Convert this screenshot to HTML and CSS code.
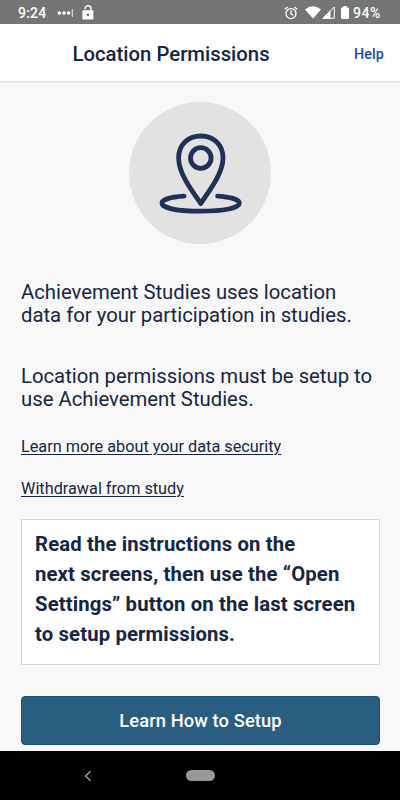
FILE: index.html
```html
<!DOCTYPE html>
<html lang="en">
<head>
<meta charset="utf-8">
<title>Location Permissions</title>
<link rel="stylesheet" href="styles.css">
</head>
<body>
<div class="status">
  <span class="time">9:24</span>
  <svg class="dots" width="17" height="8" viewBox="0 0 17 8" fill="#fff"><circle cx="2.3" cy="4" r="1.8"/><circle cx="7" cy="4" r="1.8"/><circle cx="11.7" cy="4" r="1.8"/><path d="M14.8 0h.9v8h-.9z"/></svg>
  <svg class="lock" width="12" height="15" viewBox="0 0 12 15"><path d="M3 4.200V3.800a3 3 0 0 1 6 0V6" fill="none" stroke="#fff" stroke-width="1.4"/><rect x=".4" y="5.2" width="11" height="9.3" rx="1.3" fill="#fff"/><circle cx="5.9" cy="9.8" r="1.3" fill="#757575"/></svg>
  <svg class="alarm" width="14" height="14" viewBox="0 0 14 14" fill="none" stroke="#fff" stroke-width="1.3"><circle cx="7" cy="7.6" r="5"/><path d="M7 4.5v3.4l2.2 1.3M.8 3.3l2.8-2.3M13.2 3.3L10.4 1"/></svg>
  <svg class="wifi" width="16" height="13" viewBox="0 0 16 13" fill="#fff"><path d="M0 3.4Q8-2.7 16 3.4L8 12.6z"/></svg>
  <svg class="signal" width="13" height="13" viewBox="0 0 13 13"><path d="M.9 12.3L12.3 1v11.300z" fill="none" stroke="#fff" stroke-width="1"/><path d="M0 12.700L8.500 4.200v8.500z" fill="#fff"/></svg>
  <svg class="battery" width="8" height="13" viewBox="0 0 8 14" preserveAspectRatio="none" fill="#fff"><path d="M2.300 0h3.400v1.500H7q1 0 1 1V13q0 1-1 1H1q-1 0-1-1V2.500q0-1 1-1h1.300z"/></svg>
  <span class="percent">94%</span>
</div>
<header class="header">
  <h1 class="title">Location Permissions</h1>
  <a class="help">Help</a>
</header>
<main class="content">
  <div class="badge">
    <svg width="142" height="142" viewBox="0 0 142 142" fill="none" stroke="#1f3158" stroke-width="4.800" stroke-linecap="round" stroke-linejoin="round"><path d="M71.800 101.500C63 89 49.600 71.500 49.600 56C49.600 42.500 59 34 71.800 34S94 42.500 94 56C94 71.500 80 89 71.800 101.500z"/><circle cx="71.800" cy="56" r="10.300"/><path d="M55 94.200C41 95 33 98 33 101.200C33 106 49 109.200 71.800 109.200S110.300 106 110.300 101.200C110.300 98 102 95 88.600 94.200"/></svg>
  </div>
  <p class="lead">Achievement Studies uses location<br>data for your participation in studies.</p>
  <p class="lead">Location permissions must be setup to<br>use Achievement Studies.</p>
  <a class="link">Learn more about your data security</a>
  <a class="link">Withdrawal from study</a>
  <div class="note">Read the instructions on the<br>next screens, then use the “Open<br>Settings” button on the last screen<br>to setup permissions.</div>
  <div class="button">Learn How to Setup</div>
</main>
<nav class="nav">
  <svg class="back" width="8" height="12" viewBox="0 0 8 12" fill="none" stroke="#999" stroke-width="1.500"><path d="M6.500 1.300L1.600 6l4.900 4.700"/></svg>
  <span class="home"></span>
</nav>
</body>
</html>
```
FILE: styles.css
```css
* { box-sizing: border-box; }
body { margin: 0; width: 400px; height: 800px; overflow: hidden; display: flex; flex-direction: column; background: #f8f8f8; color: #142644; font-family: Roboto, sans-serif; white-space: nowrap; }
svg { display: block; flex: none; }
.status { height: 24px; flex: none; display: flex; align-items: center; background: #757575; color: #fff; font-size: 14px; font-weight: 500; padding: 1px 0 0 18px; }
.time { width: 39px; letter-spacing: .2px; }
.lock { margin-left: 8px; }
.alarm { margin-left: 190px; }
.wifi { margin-left: 6.500px; }
.signal { margin-left: 1px; }
.battery { margin-left: 6.500px; }
.percent { margin-left: 4px; letter-spacing: .6px; }
.header { height: 57px; flex: none; display: flex; align-items: center; background: #fff; box-shadow: 0 1px 2px rgba(0,0,0,.14); padding: 3px 16px 0 72.500px; position: relative; }
.title { margin: 0; font-size: 20.300px; font-weight: 500; line-height: 24px; letter-spacing: .02px; }
.help { margin-left: auto; font-size: 14.300px; font-weight: 500; color: #1648b5; letter-spacing: .1px; }
.content { flex: 1; min-height: 0; display: flex; flex-direction: column; padding: 21px 20px 0 21px; }
.badge { width: 142px; height: 142px; flex: none; margin-left: 108px; border-radius: 50%; background: #e2e2e2; }
.lead { margin: 37px 0 0; font-size: 20.300px; font-weight: 400; line-height: 23.500px; height: 47px; }
.badge + .lead { margin-top: 36.500px; }
.link { align-self: flex-start; font-size: 16.250px; font-weight: 400; line-height: 20px; margin-top: 22px; text-decoration: underline; text-decoration-thickness: 1px; text-underline-offset: 2px; }
.lead + .link { margin-top: 25.500px; }
.note { margin: 20px 0 0; height: 146px; flex: none; background: #fff; border: 1px solid #cbd9e2; padding: 9px 13px; font-size: 20.300px; font-weight: 700; line-height: 30px; letter-spacing: .14px; }
.button { margin: 31px 0 0; height: 49px; flex: none; display: flex; align-items: center; justify-content: center; border: 1px solid #15507a; border-radius: 4px; background: #295e81; color: #fff; font-size: 18.300px; font-weight: 500; letter-spacing: .12px; }
.nav { height: 49px; flex: none; display: flex; align-items: center; background: #000; }
.back { margin-left: 84px; }
.home { width: 29px; height: 11px; border-radius: 6px; background: #999; margin-left: 94px; }
```
